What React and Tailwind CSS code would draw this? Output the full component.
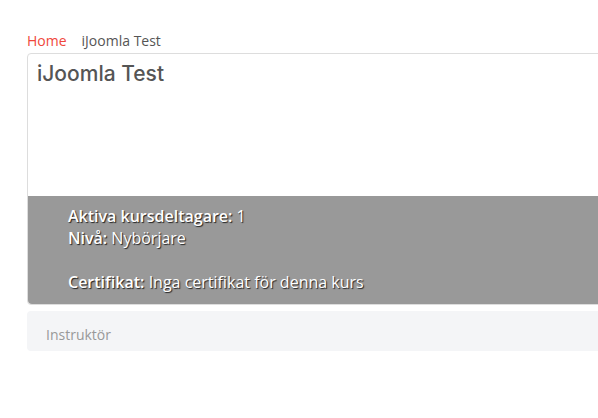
export default function App() {
  const font = { fontFamily: '"Open Sans", "Liberation Sans", sans-serif' };
  return (
    <div className="w-[598px] h-[418px] overflow-hidden bg-white" style={font}>
      <div className="w-[640px] pl-[27px] pt-[31px]">
        {/* breadcrumb */}
        <div className="flex gap-[15px] text-[14px] leading-[20px]">
          <span className="text-[#f0473b]">Home</span>
          <span className="text-[#555]">iJoomla Test</span>
        </div>

        {/* course card */}
        <div className="mt-[2px] border border-[#dddddd] rounded-[4px]">
          <div className="h-[142px] px-[9px] pt-[6px]">
            <h1
              className="text-[21px] leading-[28px] font-medium text-[#555]"
              style={{ fontFamily: '"Inter", "Open Sans", sans-serif' }}
            >
              iJoomla Test
            </h1>
          </div>
          <div className="bg-[#999999] rounded-b-[4px] pl-[40px] pt-[9px] pb-[11px] text-[16px] leading-[22px] text-white [text-shadow:1px_1px_1px_#222]">
            <div><span className="font-semibold">Aktiva kursdeltagare:</span> 1</div>
            <div><span className="font-semibold">Nivå:</span> Nybörjare</div>
            <div className="h-[22px]" />
            <div><span className="font-semibold">Certifikat:</span> Inga certifikat för denna kurs</div>
          </div>
        </div>

        {/* instructor tab */}
        <div className="mt-[6px] h-[40px] bg-[#f4f5f7] rounded-[4px] pl-[19px] pt-[14px] text-[14px] leading-[20px] text-[#999]">
          Instruktör
        </div>
      </div>
    </div>
  );
}
